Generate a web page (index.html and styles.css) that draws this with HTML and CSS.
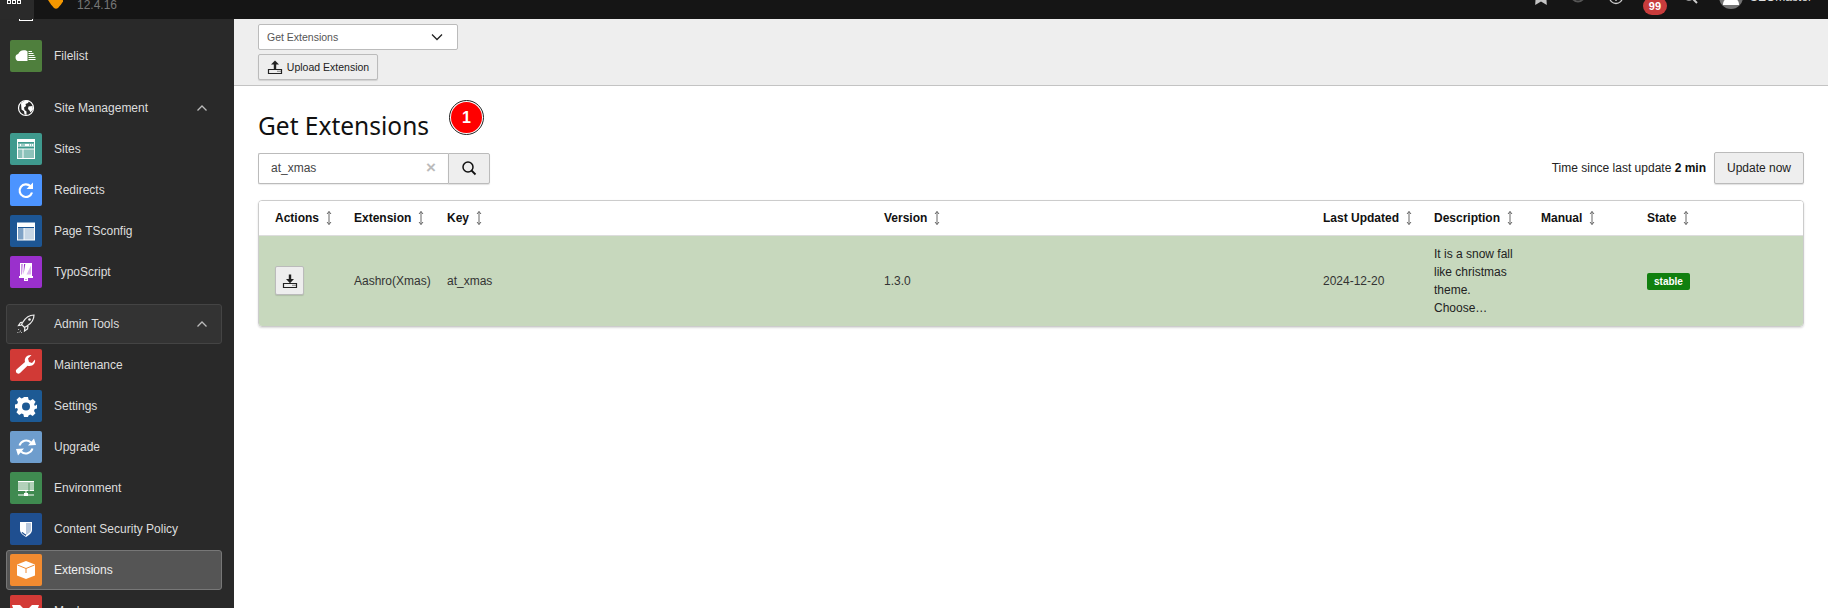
FILE: index.html
```html
<!DOCTYPE html>
<html lang="en">
<head>
<meta charset="utf-8">
<title>Get Extensions</title>
<link rel="stylesheet" href="styles.css">
</head>
<body>
<header class="topbar">
  <div class="topbar-inner">
    <div class="menu-btn">
      <svg class="grid-icon" viewBox="0 0 16 16" width="16" height="16"><g fill="none" stroke="#fff" stroke-width="1"><rect x="1.5" y="1.5" width="3" height="3"/><rect x="6.5" y="1.5" width="3" height="3"/><rect x="11.5" y="1.5" width="3" height="3"/><rect x="1.5" y="6.5" width="3" height="3"/><rect x="6.5" y="6.5" width="3" height="3"/><rect x="11.5" y="6.5" width="3" height="3"/><rect x="1.5" y="11.5" width="3" height="3"/><rect x="6.5" y="11.5" width="3" height="3"/><rect x="11.5" y="11.5" width="3" height="3"/></g></svg>
    </div>
    <svg class="logo" viewBox="0 0 16 24" width="16" height="24"><path fill="#f49700" d="M0 0h15v16.500l-2 3-3 3.500q-2 1.500-4 0l-3-3.500L0 15z"/></svg>
    <span class="version">12.4.16</span>
    <div class="tools">
      <svg class="tool tool-star" viewBox="0 0 16 16" width="16" height="16"><path fill="#c4c4c4" d="M3 1h10l.8 14L8 11.500 2.200 15z"/></svg>
      <svg class="tool tool-circle" viewBox="0 0 16 16" width="16" height="16"><circle cx="8" cy="8" r="6.500" fill="none" stroke="#555" stroke-width="2"/></svg>
      <svg class="tool tool-info" viewBox="0 0 16 16" width="16" height="16"><circle cx="8" cy="8" r="6.500" fill="none" stroke="#ccc" stroke-width="1.300"/><path d="M7.300 6.500h1.400v5.500h-1.400z" fill="#ccc"/></svg>
      <span class="count">99</span>
      <svg class="tool tool-search" viewBox="0 0 16 16" width="16" height="16"><circle cx="7" cy="6" r="5" fill="none" stroke="#ccc" stroke-width="1.600"/><path d="M10.500 9.500 15 14" stroke="#ccc" stroke-width="2"/></svg>
      <span class="avatar"><svg viewBox="0 0 24 24" width="24" height="24"><circle cx="12" cy="12" r="12" fill="#737373"/><circle cx="12" cy="8" r="5.500" fill="#fff"/><path d="M4 20c0-6 4-7 8-7s8 1 8 7z" fill="#fff"/></svg></span>
      <span class="username">SEOmaster</span>
    </div>
  </div>
</header>
<div class="shell">
  <nav class="sidebar">
    <div class="stub"></div>
    <a class="item"><span class="ico c-file"><svg viewBox="0 0 32 32" width="32" height="32"><path fill="#fff" d="M9 21a3.500 3.500 0 0 1-.8-6.900A6 6 0 0 1 14 10.200c1.500 0 2.700.4 3.500 1.200V21z"/><path stroke="#fff" stroke-width="1.100" d="M18.500 11.500h3.500M18.500 13.500h5M18.500 15.500h6M18.500 17.500h7M18.500 19.500h7"/></svg></span><span class="label">Filelist</span></a>

    <a class="group"><span class="ico"><svg viewBox="0 0 32 32" width="32" height="32"><circle cx="16" cy="16" r="7.500" fill="none" stroke="#fff" stroke-width="1.200"/><path fill="#fff" d="M11 11.500c2-2.500 6-3.500 8-2.500l-1 2-2.500 1 .5 2-2 1.500.5 2.500 2 1.500V23l-2-.8-.5-3-2.500-1.700zM18.500 14.500l4-.5.500 3.500-2.500 3-1-2-1.500-1.500z"/></svg></span><span class="label">Site Management</span><svg class="chev" viewBox="0 0 12 8" width="12" height="8"><path d="M1.500 6.500 6 2l4.500 4.500" fill="none" stroke="#bbb" stroke-width="1.300"/></svg></a>
    <a class="item"><span class="ico c-sites"><svg viewBox="0 0 32 32" width="32" height="32"><path fill="#fff" d="M7 6h18v20H7z"/><path fill="#3f9a8e" d="M8 9h16v1.700H8zM8 13.500h16v2H8z"/><path fill="#8cc2ba" d="M8 16.500h4.500V25H8zM13.500 16.500H24V25H13.500z"/><path fill="#3f9a8e" d="M8 11.500h2v1H8zM11 11.500h4v1h-4zM19 11.500h1v1h-1zM21 11.500h1v1h-1zM23 11.500h1v1h-1z"/></svg></span><span class="label">Sites</span></a>
    <a class="item"><span class="ico c-redir"><svg viewBox="0 0 32 32" width="32" height="32"><path d="M20.500 12.300A6.300 6.300 0 1 0 22 18.500" fill="none" stroke="#fff" stroke-width="2.200"/><path fill="#fff" d="M23 8.500v6.500h-6.500z"/></svg></span><span class="label">Redirects</span></a>
    <a class="item"><span class="ico c-page"><svg viewBox="0 0 32 32" width="32" height="32"><path fill="#fff" d="M7 7.500h18v18H7z"/><path fill="#1d5694" d="M8 12h16v1H8z"/><path fill="#7fa2c6" d="M8 13h5.500v11.500H8z"/><path fill="#c7d6e5" d="M14.500 13H24v11.500h-9.500z"/></svg></span><span class="label">Page TSconfig</span></a>
    <a class="item"><span class="ico c-ts"><svg viewBox="0 0 32 32" width="32" height="32"><path fill="#fff" d="M10 7h12v13h1v2h-5v3h-4v-3H9v-2h1z"/><path fill="#9a30cc" d="M11.500 8h1l-.5 10.500h-.5zM14 8h1.300l-1.800 10.500zM15.500 23h1v1h-1z"/><path fill="#dcb8ee" d="M16.500 18.500 21 9.500v9z"/></svg></span><span class="label">TypoScript</span></a>

    <a class="group group-box"><span class="ico"><svg viewBox="0 0 32 32" width="32" height="32"><path d="M13 14c3-5 7-7 11-7 0 4-2 8-7 11l-2.500 1.500-3-3zM13.500 14l-3 .5-2 3 3-.3M18 18l-.5 3-3 2 .3-3" fill="none" stroke="#eee" stroke-width="1.200"/><circle cx="19.500" cy="11.500" r="1.300" fill="#eee"/><path d="M9 21l-.8 1M11 22.500l-2.500 2.500M12 24l-1 1M8 24l-.5.500" stroke="#eee" stroke-width="1" stroke-dasharray="1 .6"/></svg></span><span class="label">Admin Tools</span><svg class="chev" viewBox="0 0 12 8" width="12" height="8"><path d="M1.500 6.500 6 2l4.500 4.500" fill="none" stroke="#bbb" stroke-width="1.300"/></svg></a>
    <a class="item"><span class="ico c-maint"><svg viewBox="0 0 32 32" width="32" height="32"><path fill="#fff" d="M25 10.500c.7 3-1.500 6.500-5.500 6.500-.8 0-1.500 0-2-.3L10 24a2.500 2.500 0 0 1-4-1 2.500 2.500 0 0 1 1-3l8-7c-1-4 2-7.500 6.500-7l-3.500 3.500 1 3.500 3 1z"/></svg></span><span class="label">Maintenance</span></a>
    <a class="item"><span class="ico c-set"><svg viewBox="0 0 32 32" width="32" height="32"><path fill="#fff" fill-rule="evenodd" d="M14 7h4l.6 2.700 1.800.8 2.400-1.500 2.800 2.800-1.500 2.400.8 1.800L27 14.500v4l-2.200.6-.8 1.800 1.500 2.400-2.800 2.800-2.400-1.500-1.800.8L18 27h-4l-.6-2.700-1.800-.8-2.400 1.500-2.800-2.800 1.500-2.400-.8-1.800L5 18.500v-4l2.200-.6.8-1.800-1.500-2.400 2.800-2.800 2.400 1.500 1.800-.8zM16 12.500a4 4 0 1 0 0 8 4 4 0 0 0 0-8z"/></svg></span><span class="label">Settings</span></a>
    <a class="item"><span class="ico c-up"><svg viewBox="0 0 32 32" width="32" height="32"><g fill="none" stroke="#fff" stroke-width="2"><path d="M9.500 14.500a7 7 0 0 1 11.500-3"/><path d="M22.500 17.500a7 7 0 0 1-11.500 3"/></g><path fill="#fff" d="M18 14.500l8-.5-2-6.500zM14 17.500l-8 .5 2 6.500z"/></svg></span><span class="label">Upgrade</span></a>
    <a class="item"><span class="ico c-env"><svg viewBox="0 0 32 32" width="32" height="32"><path fill="#fff" d="M8 9h16v10H8z"/><path stroke="#3f8a50" stroke-width=".8" d="M8 11h16M8 13h16M8 15h16M8 17h16M19 11v8"/><path fill="#fff" d="M15.500 19h1v2h1.500v3h-4v-3h1.500z"/><path stroke="#fff" d="M8 23h16"/></svg></span><span class="label">Environment</span></a>
    <a class="item"><span class="ico c-csp"><svg viewBox="0 0 32 32" width="32" height="32"><path fill="#fff" d="M10 9h12v8c0 3-3 5-6 7-3-2-6-4-6-7z"/><path fill="#1f4f90" d="M11.500 19.500c1 1.500 3 2.500 4.500 3.500v-1.500c-1-.6-2.500-1.400-3.500-2.500z"/><path fill="#b9c8dc" d="M16 10h5v7c0 2-2.500 3.700-5 5.300z"/></svg></span><span class="label">Content Security Policy</span></a>
    <a class="item item-active"><span class="ico c-ext"><svg viewBox="0 0 32 32" width="32" height="32"><path fill="#fff" d="M16 7l9 3.500v11L16 25l-9-3.500v-11z"/><path stroke="#f28b30" fill="none" d="M7.500 11l8.500 3.500 8.500-3.500M16 14.500V19"/></svg></span><span class="label">Extensions</span></a>
    <a class="item"><span class="ico c-mask"><svg viewBox="0 0 32 32" width="32" height="32"><path fill="#fff" d="M2 10h8l3 3H3zM29 10h-7l-3 3h9z"/></svg></span><span class="label">Masks</span></a>
  </nav>

  <main class="main">
    <div class="docheader">
      <div class="select"><span>Get Extensions</span><svg viewBox="0 0 12 8" width="12" height="8"><path d="M1 1.500 6 6.500l5-5" fill="none" stroke="#222" stroke-width="1.300"/></svg></div>
      <button class="btn btn-upload"><svg viewBox="0 0 16 16" width="16" height="16"><path fill="#222" d="M8 1.500l4 4H9.200V11H6.800V5.500H4z"/><path fill="none" stroke="#222" stroke-width="1.200" d="M1.500 10.500h13v4h-13z"/><path fill="#222" d="M10.500 11.800h1v1h-1zM12.500 11.800h1v1h-1z"/></svg>Upload Extension</button>
    </div>
    <div class="content">
      <h1 class="title">Get Extensions</h1>
      <span class="marker">1</span>
      <div class="toolrow">
        <div class="search">
          <div class="search-input"><span>at_xmas</span><span class="clear">×</span></div>
          <button class="search-btn"><svg viewBox="0 0 16 16" width="16" height="16"><circle cx="7" cy="7" r="5" fill="none" stroke="#111" stroke-width="1.500"/><path d="M10.500 10.500 14.500 14.500" stroke="#111" stroke-width="1.800"/></svg></button>
        </div>
        <div class="update">
          <span>Time since last update <b>2 min</b></span>
          <button class="btn btn-update">Update now</button>
        </div>
      </div>
      <div class="panel">
        <table class="table">
          <colgroup>
            <col class="w1"><col class="w2"><col class="w3"><col class="w4"><col class="w5"><col class="w6"><col class="w7"><col>
          </colgroup>
          <thead>
            <tr>
              <th>Actions<svg class="sort" viewBox="0 0 8 16" width="8" height="16"><path d="M4 1.500v13M2 4l2-2.500L6 4M2 12l2 2.500L6 12" fill="none" stroke="#666" stroke-width="1"/></svg></th>
              <th>Extension<svg class="sort" viewBox="0 0 8 16" width="8" height="16"><path d="M4 1.500v13M2 4l2-2.500L6 4M2 12l2 2.500L6 12" fill="none" stroke="#666" stroke-width="1"/></svg></th>
              <th>Key<svg class="sort" viewBox="0 0 8 16" width="8" height="16"><path d="M4 1.500v13M2 4l2-2.500L6 4M2 12l2 2.500L6 12" fill="none" stroke="#666" stroke-width="1"/></svg></th>
              <th>Version<svg class="sort" viewBox="0 0 8 16" width="8" height="16"><path d="M4 1.500v13M2 4l2-2.500L6 4M2 12l2 2.500L6 12" fill="none" stroke="#666" stroke-width="1"/></svg></th>
              <th>Last Updated<svg class="sort" viewBox="0 0 8 16" width="8" height="16"><path d="M4 1.500v13M2 4l2-2.500L6 4M2 12l2 2.500L6 12" fill="none" stroke="#666" stroke-width="1"/></svg></th>
              <th>Description<svg class="sort" viewBox="0 0 8 16" width="8" height="16"><path d="M4 1.500v13M2 4l2-2.500L6 4M2 12l2 2.500L6 12" fill="none" stroke="#666" stroke-width="1"/></svg></th>
              <th>Manual<svg class="sort" viewBox="0 0 8 16" width="8" height="16"><path d="M4 1.500v13M2 4l2-2.500L6 4M2 12l2 2.500L6 12" fill="none" stroke="#666" stroke-width="1"/></svg></th>
              <th>State<svg class="sort" viewBox="0 0 8 16" width="8" height="16"><path d="M4 1.500v13M2 4l2-2.500L6 4M2 12l2 2.500L6 12" fill="none" stroke="#666" stroke-width="1"/></svg></th>
            </tr>
          </thead>
          <tbody>
            <tr>
              <td><button class="btn btn-install"><svg viewBox="0 0 16 16" width="16" height="16"><path fill="#222" d="M6.800 1.500h2.400V6H12L8 10.200 4 6h2.800z"/><path fill="none" stroke="#222" stroke-width="1.200" d="M1.500 10.500h13v4h-13z"/><path fill="#222" d="M10.500 11.800h1v1h-1zM12.500 11.800h1v1h-1z"/></svg></button></td>
              <td>Aashro(Xmas)</td>
              <td>at_xmas</td>
              <td>1.3.0</td>
              <td>2024-12-20</td>
              <td class="desc">It is a snow fall like christmas theme. Choose…</td>
              <td></td>
              <td><span class="state">stable</span></td>
            </tr>
          </tbody>
        </table>
      </div>
    </div>
  </main>
</div>
</body>
</html>
```

FILE: styles.css
```css
* { box-sizing: border-box; }
html, body { margin: 0; height: 608px; overflow: hidden; background: #fff; }
body { font: 12px/18px "Liberation Sans", Arial, sans-serif; color: #333; }

.topbar { height: 19px; background: #151515; overflow: hidden; }
.topbar-inner { height: 45px; margin-top: -26px; display: flex; align-items: center; }
.menu-btn { width: 34px; height: 45px; background: #2a2a2a; display: flex; align-items: center; justify-content: center; flex: none; padding-right: 6px; }
.grid-icon { display: block; }
.logo { margin-left: 14px; flex: none; }
.version { margin-left: 13px; color: #777; margin-top: 16px; }
.tools { margin-left: auto; display: flex; align-items: center; color: #ddd; padding-right: 16px; }
.tool { flex: none; display: block; }
.tool-star { margin-right: 21px; margin-top: 2px; }
.tool-circle { margin-right: 22px; margin-top: -4px; }
.tool-info { margin-right: 19px; }
.count { width: 24px; height: 18px; border-radius: 9px; background: #c83c3c; color: #fff; font-size: 11px; font-weight: bold; line-height: 18px; text-align: center; margin-top: 19px; margin-right: 15px; }
.tool-search { margin-right: 21px; }
.avatar { display: block; height: 24px; margin-top: 1px; margin-right: 7px; }
.avatar svg { display: block; }
.username { font-size: 12px; margin-top: 1px; }

.shell { display: flex; height: 589px; }

/* sidebar */
.sidebar { width: 234px; flex: none; background: #292929; padding-left: 6px; overflow: hidden; color: #ddd; }
.stub { width: 14px; height: 2px; margin: 0 0 15px 13px; border: 1px solid #fff; border-top: 0; }
.item, .group { display: flex; align-items: center; width: 216px; height: 40px; margin-bottom: 1px; border: 1px solid transparent; border-radius: 3px; padding: 3px; }
.group { margin-top: 12px; }
.group-box { background: #333; border-color: #444; }
.item-active { background: #555; border-color: #777; color: #eee; }
.ico { width: 32px; height: 32px; border-radius: 2px; flex: none; display: block; }
.ico svg { display: block; }
.label { margin-left: 12px; }
.chev { margin-left: auto; margin-right: 10px; display: block; }
.c-file { background: #4f7f3d; }
.c-sites { background: #3f9a8e; }
.c-redir { background: #4c94ff; }
.c-page { background: #1d5694; }
.c-ts { background: #9a30cc; }
.c-maint { background: #d13a36; }
.c-set { background: #1d5a94; }
.c-up { background: #6e9dcd; }
.c-env { background: #3f8a50; }
.c-csp { background: #1f4f90; }
.c-ext { background: #f28b30; }
.c-mask { background: #d33a36; }

/* main */
.main { flex: 1; min-width: 0; }
.docheader { height: 67px; background: #eee; border-bottom: 1px solid #c3c3c3; padding: 5px 24px 0; }
.select { width: 200px; height: 26px; background: #fff; border: 1px solid #bbb; border-radius: 2px; display: flex; align-items: center; justify-content: space-between; padding: 0 14px 0 8px; font-size: 10.5px; color: #555; }
.select svg { display: block; }
.btn { font: inherit; color: #222; background: #eee; border: 1px solid #bbb; border-radius: 2px; box-shadow: 0 1px 1px rgba(0,0,0,.12); padding: 0; display: flex; align-items: center; justify-content: center; }
.btn-upload { width: 120px; height: 26px; margin-top: 4px; font-size: 10.5px; gap: 4px; }
.btn-upload svg, .btn-install svg { display: block; }

.content { position: relative; padding: 0 24px; }
.title { margin: 0; padding-top: 22px; height: 66px; font: 400 24.5px/36px "Noto Sans", sans-serif; color: #111; }
.marker { position: absolute; left: 215px; top: 14px; width: 35px; height: 35px; border-radius: 50%; background: #f00; border: 2px solid #fff; outline: 1px solid #222; outline-offset: -1px; color: #fff; font: bold 16px/31px "Liberation Sans", sans-serif; text-align: center; }

.toolrow { display: flex; justify-content: space-between; align-items: center; height: 32px; }
.search { display: flex; height: 31px; }
.search-input { width: 190px; background: #fff; border: 1px solid #bbb; border-right: 0; border-radius: 2px 0 0 2px; display: flex; align-items: center; justify-content: space-between; padding: 0 12px; color: #444; box-shadow: 0 1px 1px rgba(0,0,0,.08); }
.clear { color: #bbb; font-size: 17px; font-weight: bold; }
.search-btn { width: 42px; background: #eee; border: 1px solid #bbb; border-radius: 0 2px 2px 0; padding: 0; display: flex; align-items: center; justify-content: center; box-shadow: 0 1px 1px rgba(0,0,0,.12); }
.search-btn svg { display: block; }
.update { display: flex; align-items: center; gap: 8px; color: #222; }
.update b { color: #111; }
.btn-update { width: 90px; height: 32px; }

.panel { margin-top: 16px; border: 1px solid #ccc; border-radius: 4px; overflow: hidden; box-shadow: 0 1px 2px rgba(0,0,0,.15); width: 1546px; }
.table { width: 100%; border-collapse: collapse; table-layout: fixed; }
.w1 { width: 79px; }
.w2 { width: 93px; }
.w3 { width: 437px; }
.w4 { width: 439px; }
.w5 { width: 111px; }
.w6 { width: 107px; }
.w7 { width: 106px; }
th { height: 34px; padding: 0 16px; text-align: left; font-weight: bold; color: #111; background: #fff; white-space: nowrap; border-bottom: 1px solid #ddd; }
.sort { display: inline-block; vertical-align: middle; margin-left: 6px; margin-top: -1px; }
td { background: #c7d8bd; padding: 9px 16px; height: 90px; vertical-align: middle; color: #333; }
td.desc { padding-right: 8px; color: #222; }
.btn-install { width: 29px; height: 29px; }
.state { display: inline-block; background: #11800f; color: #fff; font-size: 10px; font-weight: bold; line-height: 17px; padding: 0 7px; border-radius: 2px; vertical-align: middle; }
```
